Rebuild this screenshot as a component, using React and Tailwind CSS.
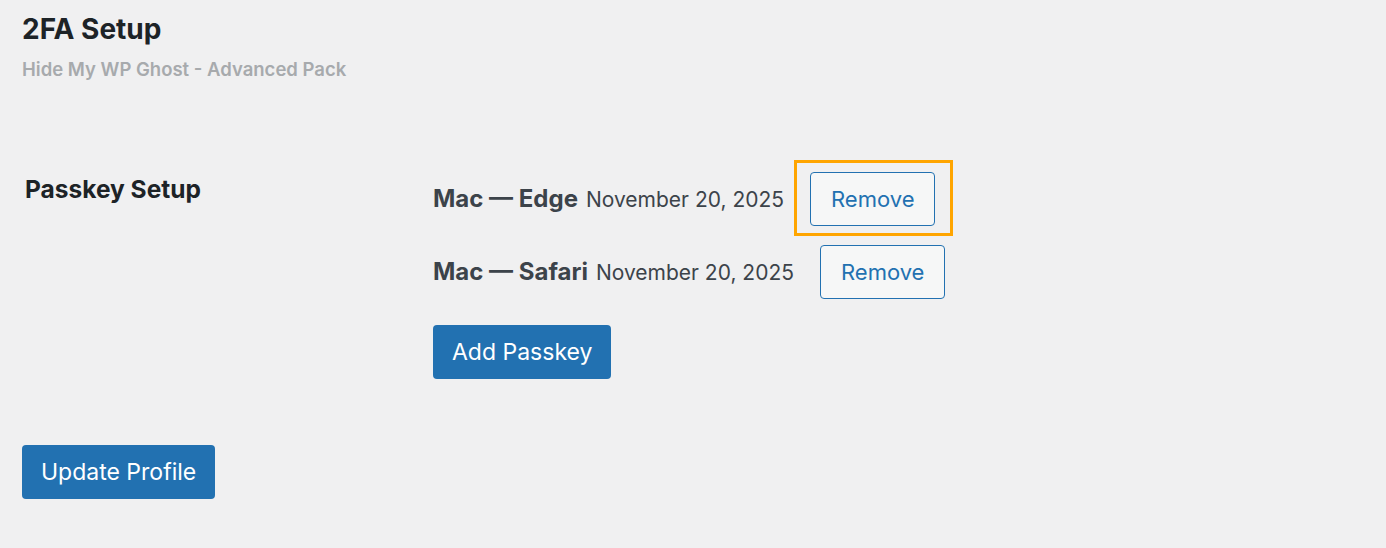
export default function App() {
  const passkeys = [
    { id: 1, name: "Mac — Edge", date: "November 20, 2025", highlight: true },
    { id: 2, name: "Mac — Safari", date: "November 20, 2025", highlight: false },
  ];

  return (
    <div className="min-h-screen bg-[#f0f0f1] pl-[22px] pt-[11px] font-['Inter','Liberation_Sans',sans-serif]">
      <h2 className="text-[28px] leading-[36px] font-bold text-[#1d2327]">2FA Setup</h2>
      <p className="mt-[10px] text-[18.5px] leading-[24px] font-semibold text-[#a7aaad]">
        Hide My WP Ghost - Advanced Pack
      </p>

      <div className="mt-[91px] flex">
        <div className="w-[411px] pl-[3px] pt-[1px] text-[24.5px] leading-[32px] font-bold text-[#1d2327]">
          Passkey Setup
        </div>

        <div className="flex flex-col items-start">
          {passkeys.map((p, i) => (
            <div key={p.id} className={`flex items-center gap-[26px] ${i > 0 ? "mt-[19px]" : ""}`}>
              <div className="flex items-baseline gap-[8px] text-[#3c434a]">
                <span className="text-[24px] leading-[32px] font-bold">{p.name}</span>
                <span className="text-[21px] leading-[28px]">{p.date}</span>
              </div>
              <div className="relative">
                {p.highlight && (
                  <span className="absolute -left-[16px] -top-[12px] -right-[18px] -bottom-[10px] border-[3px] border-[#ffa500]" />
                )}
                <button className="relative h-[54px] px-[20px] rounded-[4px] border border-[#2271b1] bg-[#f6f7f7] text-[22px] text-[#2271b1]">
                  Remove
                </button>
              </div>
            </div>
          ))}

          <button className="mt-[26px] h-[54px] px-[19px] rounded-[4px] bg-[#2271b1] text-[23px] text-white">
            Add Passkey
          </button>
        </div>
      </div>

      <button className="mt-[66px] h-[54px] px-[19px] rounded-[4px] bg-[#2271b1] text-[23px] text-white">
        Update Profile
      </button>
    </div>
  );
}
